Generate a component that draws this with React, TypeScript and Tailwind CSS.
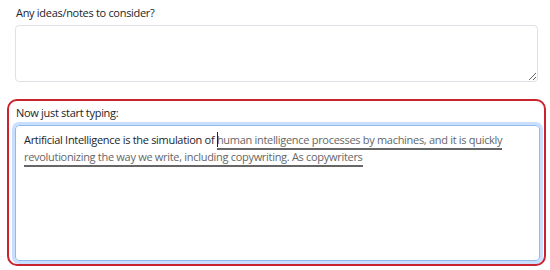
import React from "react";

export default function App() {
  return (
    <div
      className="w-[550px] h-[270px] bg-white text-[#212529] overflow-hidden"
      style={{ fontFamily: '"Open Sans", "Noto Sans", Arial, sans-serif' }}
    >
      <div className="pl-[16px] pr-[12px] pt-[4px]">
        <label className="block text-[11px] tracking-[-0.3px] leading-[17px]">Any ideas/notes to consider?</label>
        <textarea
          className="block mt-[4px] ml-[-1px] w-[523px] h-[57px] border border-[#dee2e6] rounded-[4px] bg-white resize-y outline-none"
          readOnly
        />
      </div>
      <div className="mt-[17px] ml-[7px] w-[539px] h-[167px] border-2 border-[#c8232e] rounded-[10px] px-[6px] pt-[3px]">
        <div className="pl-[1px] text-[11px] tracking-[-0.3px] leading-[17px]">Now just start typing:</div>
        <div className="mt-[4px] w-[525px] h-[136px] border border-[#8dbbf0] rounded-[4px] shadow-[0_0_0_3px_rgba(13,110,253,0.22)] px-[8px] pt-[5px] text-[11px] tracking-[-0.3px] leading-[17px]">
          <span>Artificial Intelligence is the simulation of </span>
          <span className="relative">
            <span className="absolute left-0 top-[0px] w-px h-[15px] bg-[#212529]" />
          </span>
          <span className="text-[#666] border-b-2 border-[#666] pb-[1px] [box-decoration-break:clone]">
            human intelligence processes by machines, and it is quickly revolutionizing the way we write, including copywriting. As copywriters
          </span>
        </div>
      </div>
    </div>
  );
}
